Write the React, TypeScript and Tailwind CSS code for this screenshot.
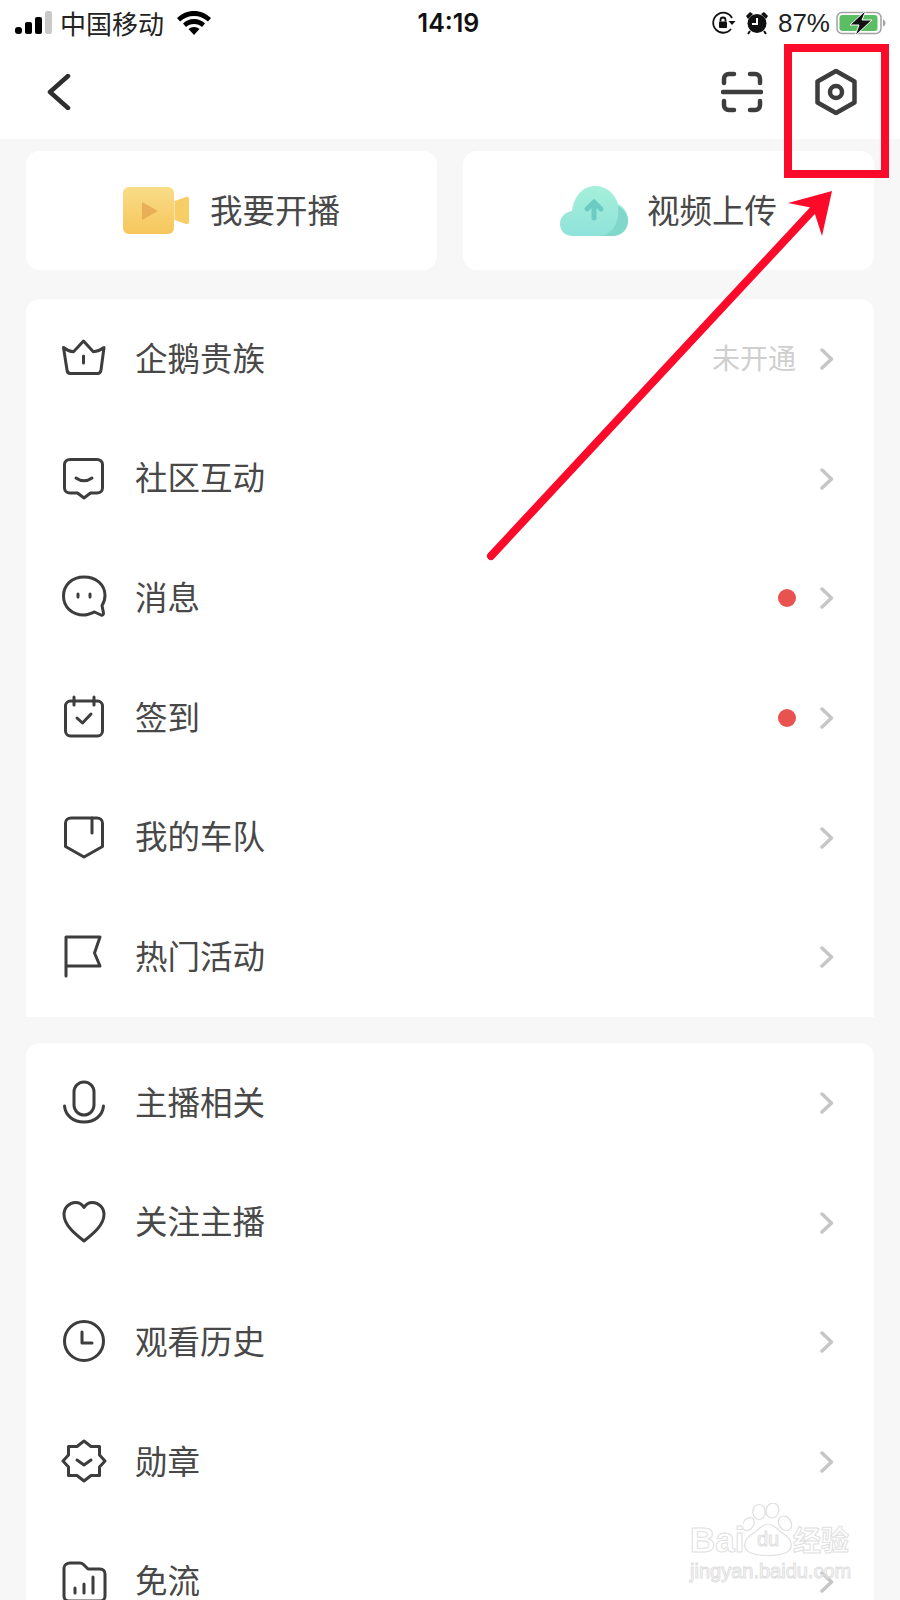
import React from "react";

const S = ({ children, w = 46 }: { children: React.ReactNode; w?: number }) => (
  <svg width={w} height={w} viewBox="0 0 46 46" fill="none" stroke="#3d3d3d" strokeWidth="3" strokeLinecap="round" strokeLinejoin="round" className="shrink-0">
    {children}
  </svg>
);

const icons: Record<string, React.ReactNode> = {
  crown: <S><path d="M2.500 12.500c3 2.500 6.500 4 10 4.200L22.500 6l9.800 10.700c3.500-.2 7.500-1.700 10.700-4.200l-3 22.500c-.3 2.300-1.500 3.500-3.500 3.500H9.500c-2 0-3.300-1.200-3.500-3.500L2.500 12.500Z" /><path d="M22.500 21v7" /></S>,
  community: <S><path d="M9 4.500h27c3 0 5.500 2.200 5.500 5V33c0 3-2.500 5-5.500 5h-6.500l-6.500 5-6.500-5H9c-3 0-5.500-2-5.500-5V9.500c0-2.800 2.500-5 5.500-5Z" /><path d="M15 23c5 3.500 11 3.500 16 0" /></S>,
  msg: <S><path d="M23 3c12 0 21 7.500 21 18.500 0 4-1 7-3 10l1.500 7.500c.2 1.500-1 2.500-2.500 2l-6.500-3C29.500 39.500 26.500 41 23 41 11 41 2.500 33 2.500 22S11 3 23 3Z" /><path d="M17 20v3M29 20v3" /></S>,
  cal: <S><rect x="4.500" y="7" width="37" height="35" rx="5" /><path d="M13 3v8M33 3v8M16 24l5.500 5L30 20" /></S>,
  team: <S><path d="M10 4h26c3 0 5.500 2 5.500 5v23.500L23 43 4.500 32.500V9c0-3 2.500-5 5.500-5Z" /><path d="M31 4v15" /></S>,
  flag: <S><path d="M5 43V4h34l-5.500 16L39 33H5" /></S>,
  mic: <S><rect x="13" y="3" width="20" height="33" rx="10" /><path d="M3.500 27c1 10 9 16 19.500 16s18.500-6 19.500-16" /></S>,
  heart: <S><path d="M23 42C14 35 3 26 3 15.500 3 8.500 8.500 3.500 14.500 3.500c3.500 0 6.500 1.500 8.500 5 2-3.500 5-5 8.500-5C37.500 3.500 43 8.500 43 15.500 43 26 32 35 23 42Z" /></S>,
  clock: <S><circle cx="23" cy="23" r="19.500" /><path d="M21 14v11h10" /></S>,
  medal: <S><path d="M23 3l7 5.500h8.500V17L44 23l-5.500 6v8.500H30L23 43l-7-5.500H7.500V29L2 23l5.500-6V8.500H16L23 3Z" /><path d="M16 22l7 5 7-5" /></S>,
  folder: <S><path d="M9 5h10c1.500 0 2.500.5 3.500 1.500L27 11h12c3 0 5 2 5 5v22c0 3-2 5-5 5H8c-3 0-5-2-5-5V10c0-3 3-5 6-5Z" /><path d="M14 30v5M23 26v9M32 19v16" /></S>,
};

const Chevron = () => (
  <svg width="14" height="24" viewBox="0 0 14 24" fill="none" stroke="#c6c6c6" strokeWidth="3.500" strokeLinecap="round" strokeLinejoin="round">
    <path d="M2 3l9.500 9L2 21" />
  </svg>
);

function Row({ icon, label, right, dot }: { icon: string; label: string; right?: string; dot?: boolean }) {
  return (
    <div className="flex h-[119.700px] items-center pl-[35px] pr-[40px]">
      <div className="flex h-[46px] w-[46px] -translate-y-[1px] items-center justify-center">{icons[icon]}</div>
      <span className="ml-[28px] flex-1 pb-[4px] text-[32.500px] leading-none text-[#484848]">{label}</span>
      {right && <span className="mr-[24px] pb-[3px] text-[28px] leading-none text-[#cfcfcf]">{right}</span>}
      {dot && <span className="mr-[24px] h-[18px] w-[18px] rounded-full bg-[#e8534f]" />}
      <Chevron />
    </div>
  );
}

function StatusBar() {
  return (
    <div className="flex h-[45px] items-center justify-between bg-white pl-[15px] pr-[14px] text-black">
      <div className="flex w-[300px] items-center">
        <svg width="37" height="24" viewBox="0 0 37 24">
          <rect x="0" y="16" width="7" height="7" rx="3" fill="#000" />
          <rect x="10" y="11" width="7" height="12" rx="2" fill="#000" />
          <rect x="20" y="6" width="7" height="17" rx="2" fill="#000" />
          <rect x="30" y="0" width="7" height="23" rx="2" fill="#c9c9c9" />
        </svg>
        <span className="ml-[8px] text-[26px] leading-none text-[#222]">中国移动</span>
        <svg className="ml-[13px]" width="34" height="24" viewBox="0 0 34 24">
          <path d="M17 0C10.500 0 5 2.500 0 7l3 3.500C7 7 11.500 5 17 5s10 2 14 5.500L34 7C29 2.500 23.500 0 17 0Z" fill="#000" />
          <path d="M17 8c-4.500 0-8 1.500-11 4.500l3 3.500c2-2 4.800-3 8-3s6 1 8 3l3-3.500C25 9.500 21.500 8 17 8Z" fill="#000" />
          <path d="M17 16c-2.200 0-4 .7-5.500 2l5.500 6 5.500-6c-1.500-1.300-3.300-2-5.500-2Z" fill="#000" />
        </svg>
      </div>
      <span className="-translate-x-[2px] translate-y-[1px] text-[25px] font-semibold leading-none text-[#111] [font-family:Inter,sans-serif]">14:19</span>
      <div className="flex w-[300px] items-center justify-end">
        <svg width="25" height="24" viewBox="0 0 25 24" fill="none" stroke="#111" strokeWidth="1.800">
          <path d="M20 18a10 10 0 1 1 1-11" />
          <path d="M24.500 10l-3.500 4-3.500-4Z" fill="#111" stroke="none" />
          <rect x="8" y="10.500" width="8" height="6.500" rx="1" fill="#111" stroke="none" />
          <path d="M9.500 10.500V9a2.500 2.500 0 0 1 5 0v1.500" />
        </svg>
        <svg className="ml-[9px]" width="24" height="25" viewBox="0 0 24 25">
          <circle cx="12" cy="13.500" r="9.500" fill="#111" />
          <path d="M12 8v6H7" stroke="#fff" strokeWidth="2" fill="none" />
          <path d="M1 6l4-4 3 2-5 5ZM23 6l-4-4-3 2 5 5Z" fill="#111" />
          <path d="M5 21l-2 3M19 21l2 3" stroke="#111" strokeWidth="2" />
        </svg>
        <span className="ml-[9px] text-[26px] leading-none text-[#222] [font-family:'Liberation_Sans',sans-serif]">87%</span>
        <svg className="ml-[6px]" width="50" height="26" viewBox="0 0 50 26">
          <rect x="1" y="2.500" width="44" height="21" rx="5" fill="none" stroke="#a2a2a2" strokeWidth="1.500" />
          <rect x="3.500" y="5" width="38" height="16" rx="3" fill="#5cbe63" />
          <path d="M47 9.500c1.500.5 2.500 2 2.500 3.500s-1 3-2.500 3.500Z" fill="#a2a2a2" />
          <path d="M30 0L14 15h9l-4 11 17-16h-10l4-10Z" fill="#111" stroke="#fff" strokeWidth="1" />
        </svg>
      </div>
    </div>
  );
}

export default function App() {
  return (
    <div className="relative h-[1600px] w-[900px] overflow-hidden bg-[#f7f7f7] [font-family:'Noto_Sans_CJK_SC','Noto_Sans',sans-serif]">
      <StatusBar />
      <div className="flex h-[94px] items-center justify-between bg-white pl-[47px] pr-[43px]">
        <svg width="24" height="36" viewBox="0 0 24 36" fill="none" stroke="#2e2e2e" strokeWidth="4.500" strokeLinecap="round" strokeLinejoin="round">
          <path d="M21 2L3 18l18 16" />
        </svg>
        <div className="flex items-center gap-[52px]">
          <svg width="42" height="42" viewBox="0 0 42 42" fill="none" stroke="#3d3d3d" strokeWidth="4.500" strokeLinecap="round" strokeLinejoin="round">
            <path d="M3 12V8c0-3 2-5 5-5h5M29 3h5c3 0 5 2 5 5v4M3 30v4c0 3 2 5 5 5h5M29 39h5c3 0 5-2 5-5v-4" />
            <path d="M2 21h38" />
          </svg>
          <svg width="42" height="46" viewBox="0 0 42 46" fill="none" stroke="#3d3d3d" strokeWidth="4.500" strokeLinejoin="round">
            <path d="M21 2l18.500 10.500v21L21 44 2.500 33.500v-21L21 2Z" />
            <circle cx="21" cy="23" r="6" />
          </svg>
        </div>
      </div>

      <div className="flex gap-[26px] px-[26px] pt-[12px]">
        <div className="flex h-[119px] flex-1 items-center justify-center rounded-[14px] bg-white">
          <svg width="66" height="48" viewBox="0 0 66 48">
            <defs>
              <linearGradient id="vid" x1="0" y1="0" x2="0" y2="1">
                <stop offset="0" stopColor="#f9dc88" />
                <stop offset="1" stopColor="#f6c65c" />
              </linearGradient>
            </defs>
            <rect x="0" y="0" width="51" height="47" rx="6" fill="url(#vid)" />
            <path d="M51.500 14l11.500-4c1.500-.5 3 .5 3 2v23c0 1.500-1.500 2.500-3 2l-11.500-4Z" fill="#f7cd66" />
            <path d="M19 15l16 9-16 9Z" fill="#e8ae58" />
          </svg>
          <span className="ml-[21px] pb-[2px] text-[32.500px] leading-none text-[#484848]">我要开播</span>
        </div>
        <div className="flex h-[119px] flex-1 items-center justify-center rounded-[14px] bg-white">
          <svg width="68" height="50" viewBox="0 0 68 50">
            <defs>
              <linearGradient id="cl" x1="0" y1="0" x2="0" y2="1">
                <stop offset="0" stopColor="#a6f0da" />
                <stop offset="1" stopColor="#8fe2da" />
              </linearGradient>
            </defs>
            <path d="M13 50C5 50 0 45 0 38c0-7 5-12 12-13C14 10 23 0 35 0c12 0 20 8 23 18 6 3 10 9 10 16 0 9-7 16-16 16Z" fill="url(#cl)" />
            <path d="M40 50c12-2 20-12 18-30 6 3 10 9 10 15 0 9-7 15-16 15Z" fill="#7fd8c9" />
            <path d="M34 32V17M27 23l7-7 7 7" fill="none" stroke="#6cccc4" strokeWidth="5" strokeLinecap="round" strokeLinejoin="round" />
          </svg>
          <span className="ml-[19px] pb-[2px] text-[32.500px] leading-none text-[#484848]">视频上传</span>
        </div>
      </div>

      <div className="mx-[26px] mt-[29px] rounded-t-[14px] bg-white">
        <Row icon="crown" label="企鹅贵族" right="未开通" />
        <Row icon="community" label="社区互动" />
        <Row icon="msg" label="消息" dot />
        <Row icon="cal" label="签到" dot />
        <Row icon="team" label="我的车队" />
        <Row icon="flag" label="热门活动" />
      </div>

      <div className="mx-[26px] mt-[26px] rounded-t-[14px] bg-white pb-[20px]">
        <Row icon="mic" label="主播相关" />
        <Row icon="heart" label="关注主播" />
        <Row icon="clock" label="观看历史" />
        <Row icon="medal" label="勋章" />
        <Row icon="folder" label="免流" />
      </div>

      {/* annotation overlay */}
      <div className="absolute left-[784px] top-[44px] h-[134px] w-[105px] border-[8px] border-[#fb0a2a]" />
      <svg className="absolute left-0 top-0" width="900" height="600" viewBox="0 0 900 600">
        <path d="M491 556L814 209" stroke="#fb0a2a" strokeWidth="8" strokeLinecap="round" fill="none" />
        <path d="M832 191L788 203 813 208 822 236Z" fill="#fb0a2a" />
      </svg>

      {/* watermark */}
      <div className="absolute left-[690px] top-[1520px] flex flex-col text-transparent [-webkit-text-stroke:1px_#e0e0e0]">
        <div className="flex h-[38px] items-center">
          <span className="w-[54px] text-[35px] font-bold leading-none [font-family:'Liberation_Sans',sans-serif]">Bai</span>
          <div className="relative flex w-[48px] items-center justify-center">
            <svg className="absolute -top-[26px] left-[-1px]" width="50" height="54" viewBox="0 0 56 72" preserveAspectRatio="none" fill="none" stroke="#e0e0e0" strokeWidth="1.500">
              <ellipse cx="18" cy="12" rx="7" ry="10" />
              <ellipse cx="33" cy="10" rx="7" ry="10" transform="rotate(8 33 10)" />
              <ellipse cx="47" cy="27" rx="7" ry="10" transform="rotate(-20 47 27)" />
              <ellipse cx="6" cy="28" rx="6" ry="9" transform="rotate(25 6 28)" />
              <path d="M28 28c-7 0-9 7-16 12-6 4-10 9-10 16 0 9 9 14 26 14s26-5 26-14c0-7-4-12-10-16-7-5-9-12-16-12Z" />
            </svg>
            <span className="relative text-[20px] leading-none [font-family:'Liberation_Sans',sans-serif]">du</span>
          </div>
          <span className="ml-[1px] text-[28px] font-bold leading-none">经验</span>
        </div>
        <span className="mt-[3px] text-[20px] leading-none [font-family:'Liberation_Sans',sans-serif]">jingyan.baidu.com</span>
      </div>
    </div>
  );
}
